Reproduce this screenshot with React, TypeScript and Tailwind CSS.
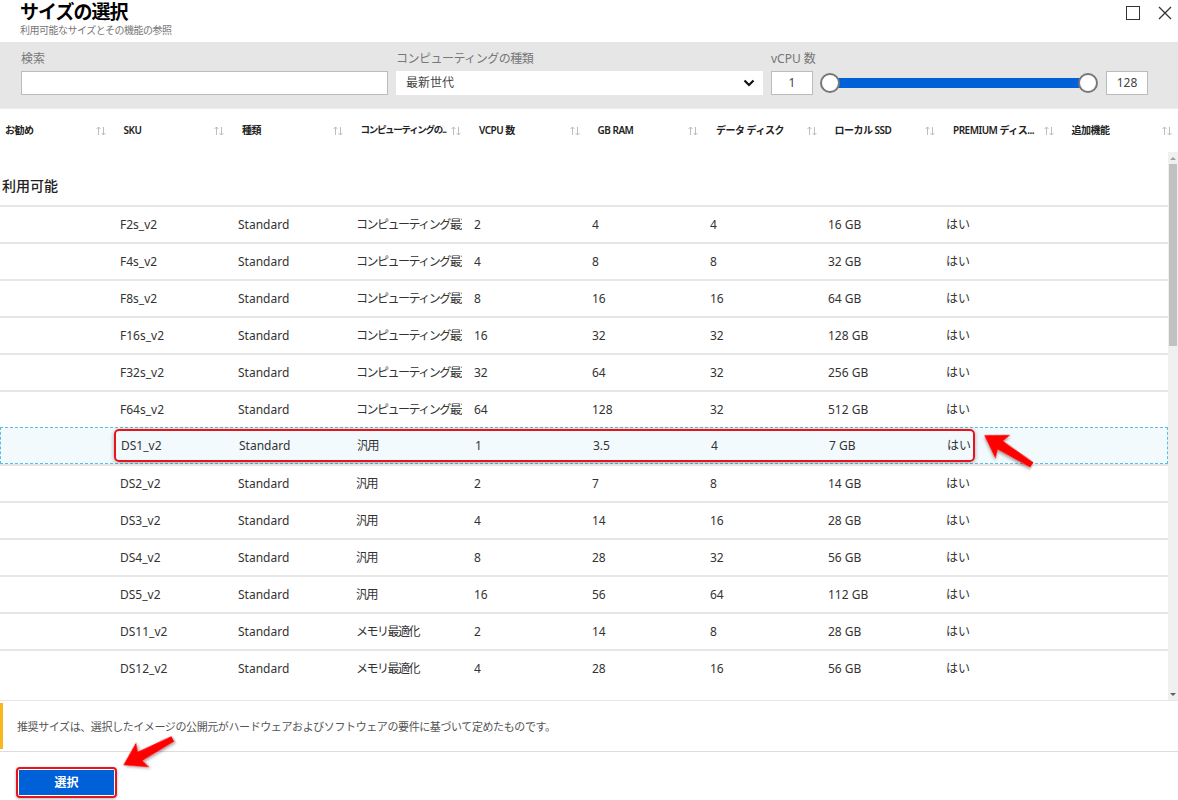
import React from 'react';

const cols = ['お勧め', 'SKU', '種類', 'コンピューティングの...', 'VCPU 数', 'GB RAM', 'データ ディスク', 'ローカル SSD', 'PREMIUM ディス...', '追加機能'];

const rows = [
    ['F2s_v2', 'Standard', 'コンピューティング最適化', '2', '4', '4', '16 GB', 'はい'],
    ['F4s_v2', 'Standard', 'コンピューティング最適化', '4', '8', '8', '32 GB', 'はい'],
    ['F8s_v2', 'Standard', 'コンピューティング最適化', '8', '16', '16', '64 GB', 'はい'],
    ['F16s_v2', 'Standard', 'コンピューティング最適化', '16', '32', '32', '128 GB', 'はい'],
    ['F32s_v2', 'Standard', 'コンピューティング最適化', '32', '64', '32', '256 GB', 'はい'],
    ['F64s_v2', 'Standard', 'コンピューティング最適化', '64', '128', '32', '512 GB', 'はい'],
    ['DS1_v2', 'Standard', '汎用', '1', '3.5', '4', '7 GB', 'はい'],
    ['DS2_v2', 'Standard', '汎用', '2', '7', '8', '14 GB', 'はい'],
    ['DS3_v2', 'Standard', '汎用', '4', '14', '16', '28 GB', 'はい'],
    ['DS4_v2', 'Standard', '汎用', '8', '28', '32', '56 GB', 'はい'],
    ['DS5_v2', 'Standard', '汎用', '16', '56', '64', '112 GB', 'はい'],
    ['DS11_v2', 'Standard', 'メモリ最適化', '2', '14', '8', '28 GB', 'はい'],
    ['DS12_v2', 'Standard', 'メモリ最適化', '4', '28', '16', '56 GB', 'はい'],
];

function SortIcon() {
    return (
        <svg width="12" height="10" viewBox="0 0 12 10" className="shrink-0">
            <path d="M3.5 9V1M1.5 3l2-2 2 2" stroke="#b5b5b5" strokeWidth="0.9" fill="none" />
            <path d="M8.5 1v8M6.5 7l2 2 2-2" stroke="#b5b5b5" strokeWidth="0.9" fill="none" />
        </svg>
    );
}

function Arrow({className, rotate}: {className: string, rotate: number}) {
    return (
        <svg width="60" height="40" viewBox="0 0 60 40" className={className} style={{transform: `rotate(${rotate}deg)`}}>
            <defs>
                <filter id={`sh${rotate}`} x="-20%" y="-20%" width="140%" height="140%">
                    <feDropShadow dx="1" dy="2" stdDeviation="1.5" floodColor="#000" floodOpacity="0.35" />
                </filter>
            </defs>
            <path d="M2 20 L24 6 L21 15 L58 17 L58 23 L21 25 L24 34 Z" fill="#f00" filter={`url(#sh${rotate})`} />
        </svg>
    );
}

export default function App() {
    return (
        <div className="relative w-[1178px] h-[800px] bg-white overflow-hidden flex flex-col text-[#333]" style={{fontFamily: '"Noto Sans", "Noto Sans CJK JP", sans-serif'}}>
            {/* title */}
            <div className="h-[42px] shrink-0 flex justify-between pl-[20px] pr-[6px]">
                <div>
                    <div className="text-[19px] font-bold leading-[24px] text-black tracking-[-1px]">サイズの選択</div>
                    <div className="text-[10px] leading-[12px] text-[#777] tracking-[-0.5px]">利用可能なサイズとその機能の参照</div>
                </div>
                <div className="flex gap-[18px] pt-[5px]">
                    <div className="w-[14px] h-[14px] border-[1.5px] border-[#333] mt-[1px]" />
                    <svg width="14" height="14" viewBox="0 0 14 14" className="mt-[1px]">
                        <path d="M1 1L13 13M13 1L1 13" stroke="#333" strokeWidth="1.3" />
                    </svg>
                </div>
            </div>

            {/* filters */}
            <div className="h-[66px] shrink-0 bg-[#e6e6e6] flex gap-[8px] pl-[21px] pr-[30px] pt-[9px]">
                <div className="w-[368px] flex flex-col gap-[4px]">
                    <div className="text-[12px] leading-[16px] text-[#777]">検索</div>
                    <div className="h-[24px] bg-white border border-[#bbb]" />
                </div>
                <div className="w-[368px] flex flex-col gap-[4px]">
                    <div className="text-[12px] leading-[16px] text-[#777] tracking-[-0.5px]">コンピューティングの種類</div>
                    <div className="h-[24px] bg-white flex items-center justify-between pl-[10px] pr-[8px]">
                        <span className="text-[12px] text-[#444]">最新世代</span>
                        <svg width="12" height="8" viewBox="0 0 12 8"><path d="M1.5 1.5L6 6l4.5-4.5" stroke="#111" strokeWidth="2.2" fill="none" /></svg>
                    </div>
                </div>
                <div className="flex-1 flex flex-col gap-[4px]">
                    <div className="text-[12px] leading-[16px] text-[#777]">vCPU 数</div>
                    <div className="flex items-center h-[24px]">
                        <div className="w-[42px] h-[24px] bg-white border border-[#bbb] flex items-center justify-center text-[12px] text-[#444]">1</div>
                        <div className="relative w-[278px] ml-[7px] h-[24px] flex items-center">
                            <div className="absolute left-[10px] right-[10px] h-[10px] bg-[#0060d8]" />
                            <div className="absolute left-0 w-[20px] h-[20px] rounded-full bg-white border-[2px] border-[#777]" />
                            <div className="absolute right-0 w-[20px] h-[20px] rounded-full bg-white border-[2px] border-[#777]" />
                        </div>
                        <div className="ml-[8px] w-[42px] h-[24px] bg-white border border-[#bbb] flex items-center justify-center text-[12px] text-[#444]">128</div>
                    </div>
                </div>
            </div>

            {/* column header */}
            <div className="h-[44px] shrink-0 flex items-center border-t border-[#eee]">
                {cols.map((c) => (
                    <div key={c} className="w-[118.5px] shrink-0 flex items-center justify-between gap-[1px] pl-[5px] pr-[12px]">
                        <span className={c.startsWith('コンピュ') ? 'text-[9.5px] font-semibold text-[#222] whitespace-nowrap tracking-[-1.3px]' : 'text-[10px] font-semibold text-[#222] whitespace-nowrap tracking-[-0.5px]'}>{c}</span>
                        <SortIcon />
                    </div>
                ))}
            </div>

            {/* body */}
            <div className="h-[548px] shrink-0 flex">
                <div className="flex-1 overflow-hidden">
                    <div className="h-[53px] pt-[24px] pl-[2px] text-[14px] leading-[20px] font-medium text-[#222]">利用可能</div>
                    {rows.map((r) => {
                        const sel = r[0] === 'DS1_v2';
                        return (
                            <div key={r[0]} className={sel ? 'relative h-[37px] flex items-center bg-[#f3fafd] border border-dashed border-[#5bbfe0]' : 'relative h-[37px] flex items-center border-t-2 border-[#e6e6e6]'}>
                                <div className="w-[119px] shrink-0" />
                                {r.map((v, i) => (
                                    <div key={i} className="w-[118px] shrink-0 pl-[1px]">
                                        <div className={i === 2 ? 'w-[106px] text-[12px] text-[#333] whitespace-nowrap overflow-hidden tracking-[-1.5px]' : 'w-[106px] text-[12px] text-[#333] whitespace-nowrap overflow-hidden'}>{v}</div>
                                    </div>
                                ))}
                                {sel && <div className="absolute left-[113px] top-[1px] w-[861px] h-[33px] rounded-[5px] border-2 border-[#e8141c] shadow-[0_1px_4px_rgba(0,0,0,0.35)]" />}
                            </div>
                        );
                    })}
                </div>
                <div className="w-[10px] bg-[#f0f0f0] flex flex-col items-center">
                    <div className="h-[12px] flex items-center justify-center"><div className="w-0 h-0 border-l-[3px] border-r-[3px] border-b-[3px] border-l-transparent border-r-transparent border-b-[#a0a0a0]" /></div>
                    <div className="w-[8px] h-[182px] bg-[#c1c1c1]" />
                    <div className="flex-1" />
                    <div className="h-[12px] flex items-center justify-center"><div className="w-0 h-0 border-l-[3px] border-r-[3px] border-t-[3px] border-l-transparent border-r-transparent border-t-[#606060]" /></div>
                </div>
            </div>

            {/* info */}
            <div className="h-[52px] shrink-0 border-t border-[#e6e6e6] border-b border-b-[#ddd] flex items-stretch py-[2px]">
                <div className="w-[3px] bg-[#f8b81b]" />
                <div className="flex items-center pl-[14px] pt-[2px] text-[11px] text-[#555] tracking-[-0.4px]">推奨サイズは、選択したイメージの公開元がハードウェアおよびソフトウェアの要件に基づいて定めたものです。</div>
            </div>

            {/* footer */}
            <div className="flex-1 pl-[16px] pt-[15px]">
                <div className="w-[101px] h-[31px] rounded-[4px] border-2 border-[#e8141c] p-[1px] shadow-[0_1px_3px_rgba(0,0,0,0.3)]">
                    <div className="w-full h-full bg-[#0060d8] flex items-center justify-center text-white text-[12px] font-bold">選択</div>
                </div>
            </div>

            <Arrow className="absolute left-[978px] top-[430px]" rotate={32} />
            <Arrow className="absolute left-[118px] top-[732px]" rotate={-28} />
        </div>
    );
}
